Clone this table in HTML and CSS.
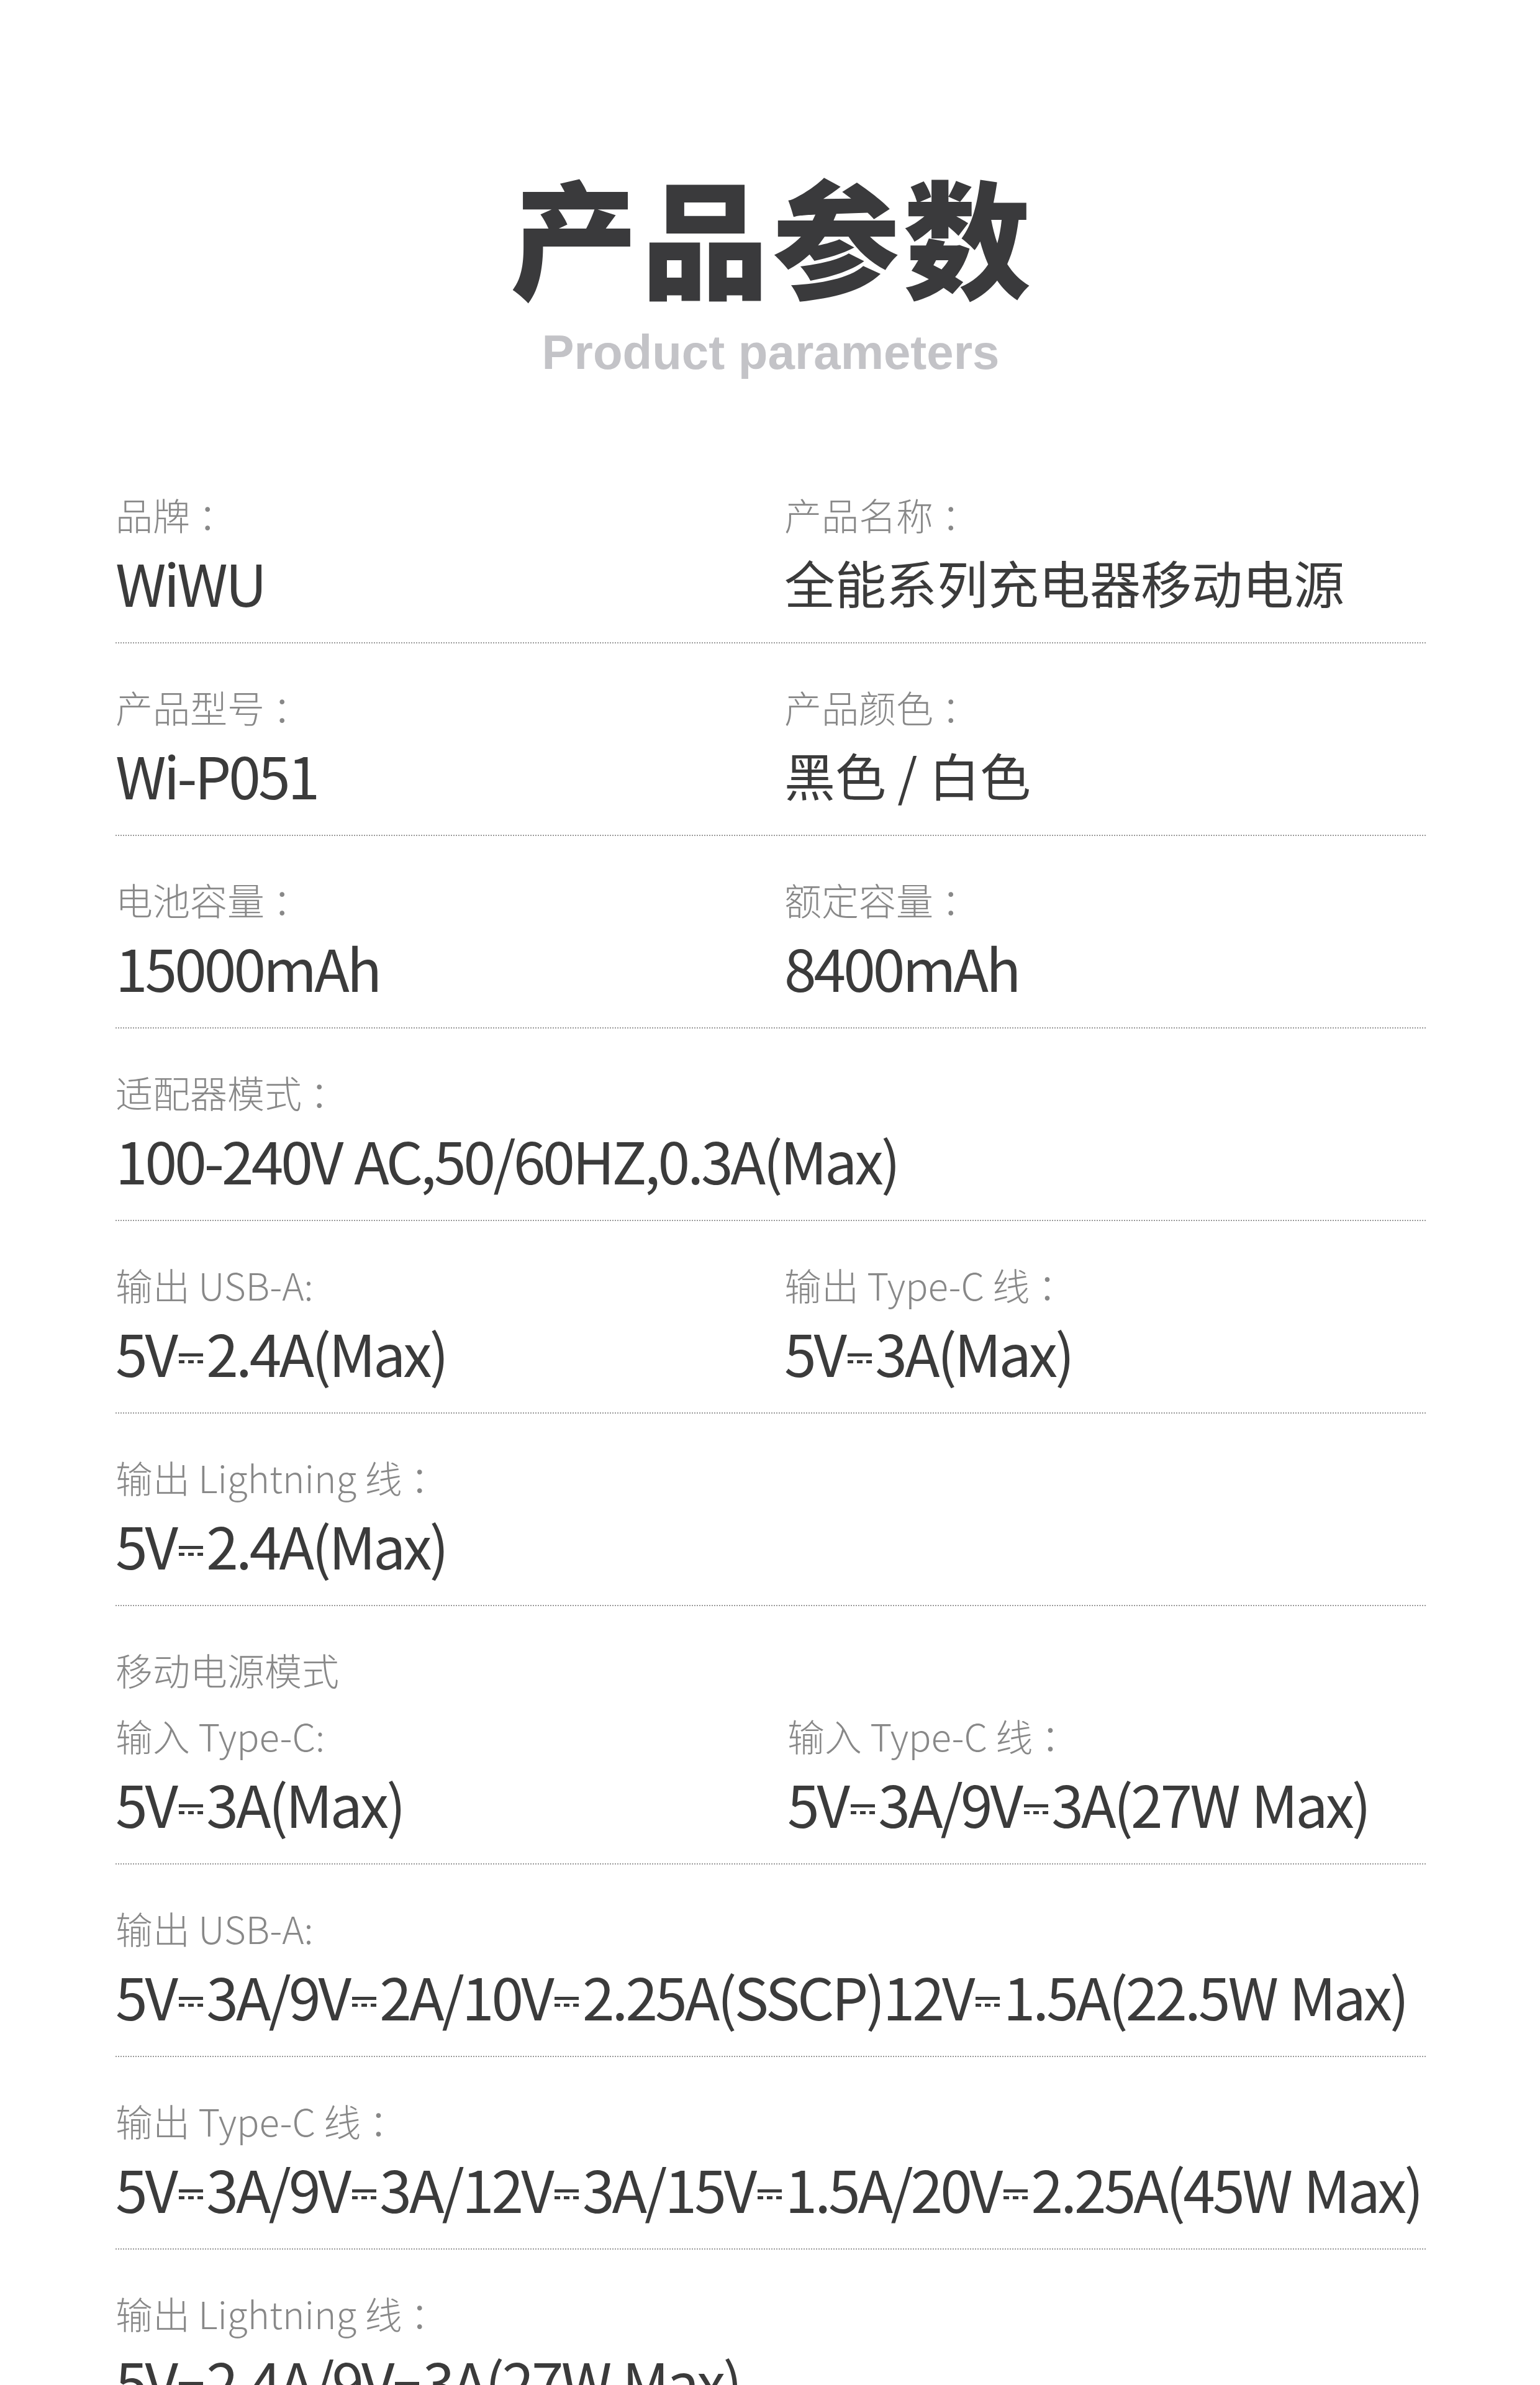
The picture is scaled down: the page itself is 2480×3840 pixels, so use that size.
FILE: index.html
```html
<!DOCTYPE html>
<html lang="zh-CN">
<head>
<meta charset="utf-8">
<title>产品参数</title>
<link rel="stylesheet" href="styles.css">
</head>
<body>
<main class="page">
  <header class="head">
    <h1 class="title">产品参数</h1>
    <p class="subtitle">Product parameters</p>
  </header>

  <section class="specs">
    <div class="row two">
      <div class="cell"><div class="label">品牌 ：</div><div class="value">WiWU</div></div>
      <div class="cell"><div class="label">产品名称 ：</div><div class="value cjk">全能系列充电器移动电源</div></div>
    </div>
    <div class="row two">
      <div class="cell"><div class="label">产品型号 ：</div><div class="value">Wi-P051</div></div>
      <div class="cell"><div class="label">产品颜色 ：</div><div class="value cjk">黑色 / 白色</div></div>
    </div>
    <div class="row two">
      <div class="cell"><div class="label">电池容量 ：</div><div class="value">15000mAh</div></div>
      <div class="cell"><div class="label">额定容量 ：</div><div class="value">8400mAh</div></div>
    </div>
    <div class="row">
      <div class="label">适配器模式 ：</div>
      <div class="value">100-240V AC,50/60HZ,0.3A(Max)</div>
    </div>
    <div class="row two">
      <div class="cell"><div class="label">输出 USB-A:</div><div class="value">5V<span class="dc"></span>2.4A(Max)</div></div>
      <div class="cell"><div class="label">输出 Type-C 线 ：</div><div class="value">5V<span class="dc"></span>3A(Max)</div></div>
    </div>
    <div class="row">
      <div class="label">输出 Lightning 线 ：</div>
      <div class="value">5V<span class="dc"></span>2.4A(Max)</div>
    </div>
    <div class="row">
      <div class="label section">移动电源模式</div>
      <div class="two">
        <div class="cell"><div class="label">输入 Type-C:</div><div class="value">5V<span class="dc"></span>3A(Max)</div></div>
        <div class="cell shift"><div class="label">输入 Type-C 线 ：</div><div class="value">5V<span class="dc"></span>3A/9V<span class="dc"></span>3A(27W Max)</div></div>
      </div>
    </div>
    <div class="row">
      <div class="label">输出 USB-A:</div>
      <div class="value">5V<span class="dc"></span>3A/9V<span class="dc"></span>2A/10V<span class="dc"></span>2.25A(SSCP)12V<span class="dc"></span>1.5A(22.5W Max)</div>
    </div>
    <div class="row">
      <div class="label">输出 Type-C 线 ：</div>
      <div class="value">5V<span class="dc"></span>3A/9V<span class="dc"></span>3A/12V<span class="dc"></span>3A/15V<span class="dc"></span>1.5A/20V<span class="dc"></span>2.25A(45W Max)</div>
    </div>
    <div class="row">
      <div class="label">输出 Lightning 线 ：</div>
      <div class="value">5V<span class="dc"></span>2.4A/9V<span class="dc"></span>3A(27W Max)</div>
    </div>
  </section>
</main>
</body>
</html>
```

FILE: styles.css
```css
html, body {
  margin: 0;
  padding: 0;
  background: #ffffff;
}

.page {
  width: 2480px;
  box-sizing: border-box;
  padding: 0 184px 0 186px;
}

.head {
  padding-top: 256px;
  margin-bottom: 109px;
  text-align: center;
}

.title {
  margin: 0;
  padding-left: 6px;
  font-family: "Noto Sans CJK SC", sans-serif;
  font-weight: 900;
  font-size: 205px;
  line-height: 240px;
  color: #3a3a3c;
  letter-spacing: 6px;
}

.subtitle {
  margin: 21px 0 0;
  font-family: "Liberation Sans", Arial, sans-serif;
  font-weight: 700;
  font-size: 78px;
  line-height: 100px;
  color: #c3c3c7;
}

.specs {
  width: 2110px;
}

.row {
  padding: 62px 0 42px;
  border-bottom: 2px dotted #9a9a9a;
}

.two {
  display: grid;
  grid-template-columns: 1077px 1fr;
}

.shift {
  padding-left: 5px;
}

.label {
  font-family: "Noto Sans CJK SC", sans-serif;
  font-weight: 300;
  font-size: 60px;
  line-height: 80px;
  color: #888888;
  white-space: nowrap;
}

.label.section {
  margin-bottom: 26px;
}

.value {
  margin-top: 14px;
  font-family: "Noto Sans CJK SC", sans-serif;
  font-size: 93px;
  line-height: 110px;
  letter-spacing: -4px;
  word-spacing: 4px;
  color: #3b3b3b;
  white-space: nowrap;
}

.value.cjk {
  font-size: 82px;
  letter-spacing: 0;
  word-spacing: 0;
}

.dc {
  display: inline-block;
  width: 0.42em;
  height: 0.06em;
  margin: 0 0.06em 0 0.05em;
  border-top: 0.055em solid currentColor;
  background: repeating-linear-gradient(90deg, currentColor 0 0.1em, transparent 0.1em 0.16em) left bottom / 100% 0.055em no-repeat;
  padding-bottom: 0.055em;
  vertical-align: 0.24em;
}
```
